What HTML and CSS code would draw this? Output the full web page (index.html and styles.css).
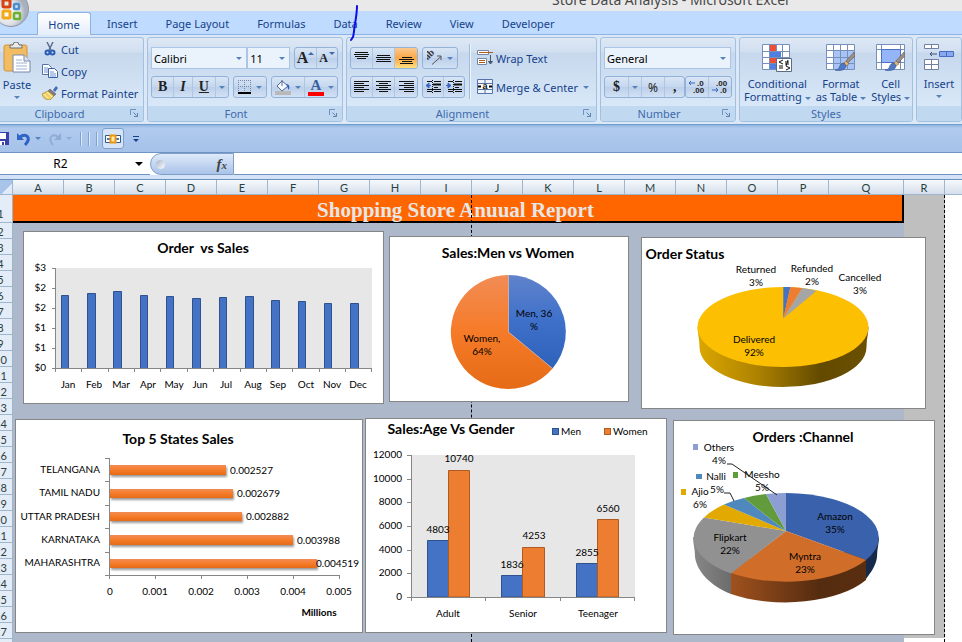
FILE: index.html
```html
<!DOCTYPE html>
<html lang="en">
<head>
<meta charset="utf-8">
<title>Store Data Analysis - Microsoft Excel</title>
<link rel="stylesheet" href="styles.css">
</head>
<body>
<svg class="defs" aria-hidden="true">
  <symbol id="launcher" viewBox="0 0 9 9"><path d="M.5 6V.5H6" fill="none" stroke="#6d93bf"/><path d="M3.500 3.500l3 3M4 7.500h3.500V4" fill="none" stroke="#5b80ad"/></symbol>
  <symbol id="brush" viewBox="0 0 20 20"><path d="M19 0L11 9l2 2 7-7z" fill="#9a8f86" stroke="#67605c" stroke-width=".6"/><path d="M11 9l-2 2 2 3 3-2z" fill="#e8b469" stroke="#7b5b33" stroke-width=".5"/><path d="M9 11c-3 0-4 2-5 5-1 1-2 2-4 2 4 1 10 1 11-4z" fill="#4f78c4" stroke="#345596" stroke-width=".6"/></symbol>
</svg>

<header class="titlebar"><h1>Store Data Analysis - Microsoft Excel</h1></header>

<button class="office" aria-label="Office menu">
  <svg viewBox="0 0 36 36" width="36" height="36">
    <defs><radialGradient id="orb" cx=".4" cy=".6"><stop offset="0" stop-color="#fff"/><stop offset=".7" stop-color="#dcdfe6"/><stop offset="1" stop-color="#aab1be"/></radialGradient></defs>
    <circle cx="18" cy="18" r="17.500" fill="url(#orb)" stroke="#8e96a6"/>
    <g fill="none" stroke-width="3">
      <rect x="10" y="9" width="7" height="7" rx="1" stroke="#d8420f"/>
      <rect x="21" y="13" width="5" height="5" rx="1" stroke="#4a8fd2" stroke-width="2.500"/>
      <rect x="10" y="20" width="7" height="7" rx="1" stroke="#f3a916"/>
      <rect x="21" y="22" width="6" height="6" rx="1" stroke="#6cb22c" stroke-width="2.500"/>
    </g>
  </svg>
</button>

<nav class="tabs">
  <a class="tab active" href="#home">Home</a>
  <a class="tab" href="#insert">Insert</a>
  <a class="tab" href="#layout">Page Layout</a>
  <a class="tab" href="#formulas">Formulas</a>
  <a class="tab" href="#data">Data</a>
  <a class="tab" href="#review">Review</a>
  <a class="tab" href="#view">View</a>
  <a class="tab" href="#developer">Developer</a>
</nav>
<svg class="pen" viewBox="0 0 10 38" width="10" height="38" aria-hidden="true"><path d="M7 1c0 6-1 12-2 18-1 5-1 10-2 13l-2 3" fill="none" stroke="#0d0de8" stroke-width="2" stroke-linecap="round"/></svg>

<section class="ribbon">
  <div class="group clipboard">
    <div class="body">
      <button class="tall paste">
        <svg width="28" height="31" viewBox="0 0 28 31"><rect x="1" y="3" width="23" height="26" rx="2" fill="#f2bd62" stroke="#cf9440"/><path d="M7 6V3h3a3 3 0 0 1 6 0h3v3z" fill="#e9eaec" stroke="#6f6f6f"/><path d="M10 13h11l6 6v11H10z" fill="#fff" stroke="#7688a8"/><path d="M21 13v6h6" fill="#dde6f4" stroke="#7688a8"/><path d="M13 18h6m-6 3h11m-11 3h11m-11 3h11" stroke="#9fb2d3"/></svg>
        <span>Paste</span><i class="caret"></i>
      </button>
      <div class="stack">
        <button class="flat"><svg width="16" height="14" viewBox="0 0 16 14"><path d="M5 0l4 8M11 0L7 8" stroke="#5c6f8c" stroke-width="1.500"/><circle cx="5.500" cy="10.500" r="2" fill="none" stroke="#2a5db5" stroke-width="2"/><circle cx="10.500" cy="10.500" r="2" fill="none" stroke="#2a5db5" stroke-width="2"/></svg>Cut</button>
        <button class="flat"><svg width="16" height="14" viewBox="0 0 16 14"><path d="M.5.500h6l3 3v7h-9z" fill="#fff" stroke="#5572a8"/><path d="M2 4h4M2 6h5M2 8h5" stroke="#6f93d2"/><path d="M6.500 4.500h6l3 3v6h-9z" fill="#fff" stroke="#3c5fa5"/><path d="M8 8h4m-4 2h6m-6 2h6" stroke="#6f93d2"/></svg>Copy</button>
        <button class="flat"><svg width="16" height="14" viewBox="0 0 16 14"><path d="M11 4l3-4 2 2-3 4z" fill="#456bb8"/><path d="M8 3l6 5-2 2-6-5z" fill="#7f7a83" stroke="#555" stroke-width=".5"/><path d="M6 5L0 8c1 4 4 6 8 6l4-4z" fill="#f1d269" stroke="#a27b2b" stroke-width=".7"/><path d="M2 8l4 4m-1-6l5 5" stroke="#fff2b3"/></svg>Format Painter</button>
      </div>
    </div>
    <footer><span>Clipboard</span><svg class="launch"><use href="#launcher"/></svg></footer>
  </div>

  <div class="group font">
    <div class="body rows">
      <div class="row">
        <span class="combo name"><select aria-label="Font"><option>Calibri</option></select></span>
        <span class="combo size"><select aria-label="Font size"><option>11</option></select></span>
        <span class="set push"><button class="serif a-big" aria-label="Grow font">A<sup class="up"></sup></button><button class="serif a-small" aria-label="Shrink font">A<sup class="down"></sup></button></span>
      </div>
      <div class="row">
        <span class="set"><button class="serif">B</button><button class="serif it">I</button><button class="serif"><u>U</u></button><button class="mini" aria-label="Underline styles"><i class="caret"></i></button></span>
        <span class="set"><button aria-label="Borders"><svg width="14" height="14" viewBox="0 0 14 14"><path d="M.5 0v13M6.500 0v13M12.500 0v13M0 .5h13M0 6.500h13" stroke="#7185a5" stroke-dasharray="1 1"/><path d="M0 13h13" stroke="#000" stroke-width="2"/></svg><i class="caret"></i></button></span>
        <span class="set push tints"><button aria-label="Fill color"><svg width="16" height="16" viewBox="0 0 16 16"><path d="M7 2l6 5-6 5-5-5z" fill="#f4f8ff" stroke="#53688e"/><path d="M7 7V1" stroke="#53688e"/><path d="M11 5c3 0 4 2 3 6-2-2-1-4-3-6z" fill="#2e62b8"/><path d="M0 14h16" stroke="#b9b9b9" stroke-width="4"/></svg><i class="caret"></i></button><button aria-label="Font color"><span class="ink">A</span><i class="caret"></i></button></span>
      </div>
    </div>
    <footer><span>Font</span><svg class="launch"><use href="#launcher"/></svg></footer>
  </div>

  <div class="group align">
    <div class="body split">
      <div class="rows">
        <div class="row">
          <span class="set three"><button aria-label="Top align"><svg class="lines" width="15" height="14"><path d="M1 1.500h13M0 3.500h15M1 5.500h13M3 7.500h9"/></svg></button><button aria-label="Middle align"><svg class="lines" width="15" height="14"><path d="M1 4.500h13M0 6.500h15M1 8.500h13M0 10.500h15"/></svg></button><button class="on" aria-label="Bottom align"><svg class="lines" width="15" height="14"><path d="M3 6.500h10M0 8.500h15M3 10.500h10M1 12.500h13"/></svg></button></span>
          <span class="set"><button aria-label="Orientation"><svg width="16" height="16" viewBox="0 0 16 16"><text x="0" y="9" class="ab" transform="rotate(-45 2 9)">ab</text><path d="M5 14.500l9-8M10 6h4v4" stroke="#555" fill="none"/></svg><i class="caret"></i></button></span>
        </div>
        <div class="row">
          <span class="set three"><button aria-label="Align left"><svg class="lines" width="15" height="14"><path d="M0 1.500h15M0 3.500h10M0 5.500h15M0 7.500h10M0 9.500h15M0 11.500h10"/></svg></button><button aria-label="Center"><svg class="lines" width="15" height="14"><path d="M0 1.500h15M3 3.500h9M0 5.500h15M3 7.500h9M0 9.500h15M3 11.500h9"/></svg></button><button aria-label="Align right"><svg class="lines" width="15" height="14"><path d="M0 1.500h15M5 3.500h10M0 5.500h15M5 7.500h10M0 9.500h15M5 11.500h10"/></svg></button></span>
          <span class="set two"><button aria-label="Decrease indent"><svg class="lines" width="16" height="14"><path d="M2 1.500h5M9 1.500h7M9 7.500h4M2 9.500h14M2 11.500h5M9 11.500h7"/><path d="M8 4.500h8" stroke-width="2"/><path d="M7.500 0v14" stroke-dasharray="1 1"/><path class="arrow" d="M6 5.500H2M4 3L1 5.500 4 8z"/></svg></button><button aria-label="Increase indent"><svg class="lines" width="16" height="14"><path d="M2 1.500h5M9 1.500h7M9 7.500h4M2 9.500h14M2 11.500h5M9 11.500h7"/><path d="M8 4.500h8" stroke-width="2"/><path d="M7.500 0v14" stroke-dasharray="1 1"/><path class="arrow" d="M0 5.500h4M2 3l3 2.500L2 8z"/></svg></button></span>
        </div>
      </div>
      <div class="rule"></div>
      <div class="rows">
        <button class="flat"><svg width="16" height="16" viewBox="0 0 16 16"><path d="M.5.500h11v4H.5zM.5 8.500h9v6H.5z" fill="#fff" stroke="#7286a8"/><path d="M2 2.500h14M2 10.500h6M2 12.500h6" stroke="#b05a1c"/><path d="M13.500 5v6M11.500 11.500h4L13.500 14z" fill="#567" stroke="#456"/></svg>Wrap Text</button>
        <button class="flat"><svg width="16" height="16" viewBox="0 0 16 16"><path d="M.5.500h15v14H.5zM8 0v4M8 11v4M0 4.500h16M0 10.500h16" fill="#eef4fd" stroke="#5673a6"/><path d="M1 5h14v5H1z" fill="#fff"/><path d="M1 7.500h3M12 7.500h3" stroke="#000" stroke-width="2"/><text x="8" y="10" class="tiny-a">a</text></svg>Merge &amp; Center<i class="caret"></i></button>
      </div>
    </div>
    <footer><span>Alignment</span><svg class="launch"><use href="#launcher"/></svg></footer>
  </div>

  <div class="group number">
    <div class="body rows">
      <div class="row"><span class="combo wide"><select aria-label="Number format"><option>General</option></select></span></div>
      <div class="row">
        <span class="set"><button class="serif">$</button><button class="mini" aria-label="Currency list"><i class="caret"></i></button><button class="percent">%</button><button class="serif">,</button></span>
        <span class="set two push"><button aria-label="Increase decimal"><svg width="18" height="14" viewBox="0 0 18 14"><path d="M7 3H1m2-2L1 3l2 2" stroke="#3565c4" fill="none"/><text x="9" y="6" class="dec">.0</text><text x="5" y="13" class="dec">.00</text></svg></button><button aria-label="Decrease decimal"><svg width="18" height="14" viewBox="0 0 18 14"><text x="5" y="6" class="dec">.00</text><path d="M1 10h6m-2-2l2 2-2 2" stroke="#3565c4" fill="none"/><text x="9" y="13" class="dec">.0</text></svg></button></span>
      </div>
    </div>
    <footer><span>Number</span><svg class="launch"><use href="#launcher"/></svg></footer>
  </div>

  <div class="group styles">
    <div class="body">
      <button class="tall">
        <svg width="30" height="28" viewBox="0 0 30 28"><path d="M.5.500h27v25H.5z" fill="#fff"/><path d="M7 0h7v7H7zM7 13h12v6H7z" fill="#ee4e38"/><path d="M7 7h12v6H7zM7 19h7v6H7z" fill="#4f7fe0"/><path d="M.5.500h27v25H.5zM7.500 0v25M14.500 0v7M20.500 0v25M0 7.500h28M0 13.500h28M0 19.500h28" fill="none" stroke="#7790bb"/><path d="M14.500 14.500h15v13h-15z" fill="#fff" stroke="#5b6c88"/><path d="M21 16l-4 2 4 2M17 22h4M17 24h4M23 18h4M23 20h4M26 16l-2 6M24 22l4 2-4 2" fill="none" stroke="#111"/></svg>
        <span>Conditional<br>Formatting <i class="caret"></i></span>
      </button>
      <button class="tall">
        <svg width="30" height="28" viewBox="0 0 30 28"><path d="M.5.500h28v25H.5z" fill="#fff"/><path d="M7 7h22v18H7z" fill="#a8c4f7"/><path d="M.5.500h28v25H.5zM7.500 0v25M14.500 0v25M21.500 0v25M0 6.500h28M0 13.500h28M0 19.500h28" fill="none" stroke="#7790bb"/><use href="#brush" x="9" y="8" width="20" height="20"/></svg>
        <span>Format<br>as Table <i class="caret"></i></span>
      </button>
      <button class="tall">
        <svg width="30" height="28" viewBox="0 0 30 28"><path d="M.5.500h28v25H.5z" fill="#fff"/><path d="M.5.500h28v25H.5zM5.500 0v25M24.500 0v25M0 5.500h28M0 18.500h28" fill="none" stroke="#7790bb"/><path d="M5.500 5.500h19v13h-19z" fill="#94b6f8" stroke="#4a71c4"/><use href="#brush" x="9" y="8" width="20" height="20"/></svg>
        <span>Cell<br>Styles <i class="caret"></i></span>
      </button>
    </div>
    <footer><span>Styles</span></footer>
  </div>

  <div class="group cells">
    <div class="body">
      <button class="tall">
        <svg width="30" height="28" viewBox="0 0 30 28"><path d="M.5.500h14v4H.5zM7.500.500v4M.5 15.500h14v10H.5zM7.500 15v10M.5 20.500h14" fill="#fff" stroke="#7181a3"/><path d="M15.500 7.500h14v5h-14zM22.500 7v5" fill="#86a9f0" stroke="#466cc0"/><path d="M13 10H6m2-2l-2 2 2 2" fill="none" stroke="#3a5078"/></svg>
        <span>Insert</span><i class="caret"></i>
      </button>
    </div>
    <footer></footer>
  </div>
</section>

<div class="quick">
  <button aria-label="Save"><svg width="10" height="14" viewBox="0 0 10 14"><path d="M0 0h9v13H0z" fill="#3d3fa8"/><path d="M0 1h6v6H0zM0 9h5v4H0z" fill="#fff"/><path d="M2 10h2v3H2z" fill="#3d3fa8"/></svg></button>
  <button aria-label="Undo"><svg width="14" height="14" viewBox="0 0 14 14"><path d="M3 5c6-5 12 1 5 8" fill="none" stroke="#2f64c6" stroke-width="3"/><path d="M0 1v7h7z" fill="#2f64c6"/></svg></button><i class="caret"></i>
  <button aria-label="Redo"><svg width="14" height="14" viewBox="0 0 14 14"><path d="M10 5C5 0-1 6 5 13" fill="none" stroke="#8facd6" stroke-width="2"/><path d="M13 1v7H6z" fill="#8facd6"/></svg></button><i class="caret dim"></i>
  <span class="bars"><b></b><b></b><b></b></span>
  <button class="boxed" aria-label="Merge cells"><svg width="16" height="10" viewBox="0 0 16 10"><path d="M.5 1.500h15v7H.5z" fill="#fff" stroke="#33598e"/><path d="M2 5h3m6 0h3" stroke="#4b77bb" stroke-width="2"/><path d="M5.500 1.500h5v7h-5z" fill="#ffe9a6" stroke="#e79711" stroke-width="2"/></svg></button>
  <button class="more" aria-label="Customize toolbar"><i class="caret navy"></i></button>
</div>

<div class="formula">
  <label class="namebox"><input aria-label="Name box" value="R2"><i class="caret black"></i></label>
  <button class="fx" aria-label="Insert function"><span class="knob"></span><em>f<small>x</small></em></button>
  <input class="entry" aria-label="Formula">
</div>

<main class="grid">
  <div class="colheads">
    <span class="corner"></span><span>A</span><span>B</span><span>C</span><span>D</span><span>E</span><span>F</span><span>G</span><span>H</span><span>I</span><span>J</span><span>K</span><span>L</span><span>M</span><span>N</span><span>O</span><span>P</span><span class="q">Q</span><span class="r">R</span><span class="rest"></span>
  </div>
  <div class="lower">
    <div class="rowheads"><span class="first">1</span><span>2</span><span>3</span><span>4</span><span>5</span><span>6</span><span>7</span><span>8</span><span>9</span><span>10</span><span>11</span><span>12</span><span>13</span><span>14</span><span>15</span><span>16</span><span>17</span><span>18</span><span>19</span><span>20</span><span>21</span><span>22</span><span>23</span><span>24</span><span>25</span><span>26</span><span>27</span></div>
    <div class="sheet">
      <div class="filled"><h2>Shopping Store Anuual Report</h2></div>
      <div class="gray"></div>
      <div class="break mid"></div>
      <div class="break last"></div>

      <figure class="chart c1">
        <svg viewBox="24 232 359 171" role="img" aria-label="Order vs Sales">
          <text class="t" x="203" y="253">Order &#160;vs Sales</text>
          <path d="M56 268h316v100H56z" fill="#e7e7e7"/>
          <g fill="#4472c4" stroke="#2f528f"><path d="M61.500 368.500v-73h7v73zM87.500 368.500v-75h8v75zM113.500 368.500v-77h8v77zM140.500 368.500v-73h7v73zM166.500 368.500v-72h7v72zM192.500 368.500v-70h8v70zM219.500 368.500v-71h7v71zM245.500 368.500v-72h8v72zM271.500 368.500v-68h8v68zM298.500 368.500v-67h7v67zM324.500 368.500v-65h7v65zM350.500 368.500v-65h8v65z"/></g>
          <path class="axis" d="M55.500 268v104M52 268.500h4M52 288.500h4M52 308.500h4M52 328.500h4M52 348.500h4M52 368.500h320M81.500 368v4M108.500 368v4M134.500 368v4M160.500 368v4M187.500 368v4M213.500 368v4M240.500 368v4M266.500 368v4M292.500 368v4M319.500 368v4M345.500 368v4M371.500 368v4"/>
          <g class="end"><text x="46" y="271">$3</text><text x="46" y="291">$2</text><text x="46" y="311">$2</text><text x="46" y="331">$1</text><text x="46" y="351">$1</text><text x="46" y="371">$0</text></g>
          <g><text x="68" y="388">Jan</text><text x="94" y="388">Feb</text><text x="121" y="388">Mar</text><text x="148" y="388">Apr</text><text x="174" y="388">May</text><text x="200" y="388">Jun</text><text x="226" y="388">Jul</text><text x="253" y="388">Aug</text><text x="278" y="388">Sep</text><text x="306" y="388">Oct</text><text x="332" y="388">Nov</text><text x="358" y="388">Dec</text></g>
        </svg>
      </figure>

      <figure class="chart c2">
        <svg viewBox="390 237 238 164" role="img" aria-label="Sales: Men vs Women">
          <defs>
            <linearGradient id="men" x2="0" y2="1"><stop offset="0" stop-color="#6083cb"/><stop offset=".5" stop-color="#3e70ca"/><stop offset="1" stop-color="#2e61ba"/></linearGradient>
            <linearGradient id="women" x2="0" y2="1"><stop offset="0" stop-color="#f18c55"/><stop offset=".5" stop-color="#f67b28"/><stop offset="1" stop-color="#e56b17"/></linearGradient>
          </defs>
          <text class="t" x="508" y="258">Sales:Men vs Women</text>
          <path d="M508.500 332V275a57.500 57 0 0 1 44 93.500z" fill="url(#men)"/>
          <path d="M508.500 332V275a57.500 57 0 1 0 44 93.500z" fill="url(#women)"/>
          <path d="M508.500 275v57l44 36.500" fill="none" stroke="#c9b3ad" stroke-width=".7"/>
          <text x="534" y="317">Men, 36</text><text x="534" y="330">%</text>
          <text x="482" y="342">Women,</text><text x="482" y="355">64%</text>
        </svg>
      </figure>

      <figure class="chart c3">
        <svg viewBox="642 238 283 170" role="img" aria-label="Order Status">
          <defs><linearGradient id="gold"><stop offset="0" stop-color="#dca700"/><stop offset=".35" stop-color="#ad8200"/><stop offset=".72" stop-color="#634a00"/><stop offset="1" stop-color="#6b5000"/></linearGradient></defs>
          <text class="t" x="685" y="259">Order Status</text>
          <path d="M697.500 327c0 6 2 12 2 20a83.500 40 0 0 0 167 0c0-8 2-14 2-20z" fill="url(#gold)"/>
          <ellipse cx="783" cy="327" rx="85.500" ry="40" fill="#fcbf02"/>
          <path d="M783.300 318.500V287h7z" fill="#4472c4"/>
          <path d="M783.300 318.500l7-31.500 12 1z" fill="#ed7d31"/>
          <path d="M783.300 318.500l19-30.500q8 1 14 3z" fill="#a5a5a5"/>
          <text x="756" y="273">Returned</text><text x="756" y="286">3%</text>
          <text x="812" y="272">Refunded</text><text x="812" y="285">2%</text>
          <text x="860" y="281">Cancelled</text><text x="860" y="294">3%</text>
          <text x="754" y="343">Delivered</text><text x="754" y="356">92%</text>
        </svg>
      </figure>

      <figure class="chart c4">
        <svg viewBox="16 420 346 212" role="img" aria-label="Top 5 States Sales">
          <text class="t" x="178" y="444">Top 5 States Sales</text>
          <g class="soft" fill="url(#women)"><rect x="110" y="465" width="116" height="10"/><rect x="110" y="489" width="123" height="9"/><rect x="110" y="512" width="132" height="9"/><rect x="110" y="535" width="183" height="10"/><rect x="110" y="559" width="207" height="9"/></g>
          <path class="axis" d="M109.500 458v121M105 458.500h4M105 481.500h4M105 505.500h4M105 528.500h4M105 552.500h4M105 575.500h235M155.500 575v4M201.500 575v4M247.500 575v4M293.500 575v4M339.500 575v4"/>
          <g class="end"><text x="100" y="473">TELANGANA</text><text x="100" y="496">TAMIL NADU</text><text x="100" y="520">UTTAR PRADESH</text><text x="100" y="543">KARNATAKA</text><text x="100" y="566">MAHARASHTRA</text></g>
          <g class="start"><text x="230" y="474">0.002527</text><text x="237" y="497">0.002679</text><text x="246" y="520">0.002882</text><text x="297" y="544">0.003988</text><text x="316" y="567">0.004519</text></g>
          <g><text x="110" y="595">0</text><text x="155" y="595">0.001</text><text x="201" y="595">0.002</text><text x="247" y="595">0.003</text><text x="293" y="595">0.004</text><text x="339" y="595">0.005</text></g>
          <text class="bold" x="319" y="616">Millions</text>
        </svg>
      </figure>

      <figure class="chart c5">
        <svg viewBox="366 419 300 213" role="img" aria-label="Sales: Age vs Gender">
          <text class="t" x="451" y="434">Sales:Age Vs Gender</text>
          <rect x="552.500" y="428.500" width="6" height="6" fill="#4472c4" stroke="#2f528f"/><rect x="604.500" y="428.500" width="6" height="6" fill="#ed7d31" stroke="#ae5a21"/>
          <g class="start"><text x="561" y="435">Men</text><text x="613" y="435">Women</text></g>
          <path d="M412 455h223v142H412z" fill="#e7e7e7"/>
          <path d="M427.500 597v-56.500h21V597zM501.500 597v-21.500h21V597zM576.500 597v-33.500h21V597z" fill="#4472c4" stroke="#2f528f"/>
          <path d="M448.500 597V470.500h21V597zM522.500 597v-49.500h22V597zM597.500 597v-77.500h21V597z" fill="#ed7d31" stroke="#ae5a21"/>
          <path class="axis" d="M411.500 455v146M407 455.500h4M407 479.500h4M407 502.500h4M407 526.500h4M407 550.500h4M407 573.500h4M407 597.500h228M485.500 597v4M560.500 597v4M634.500 597v4"/>
          <g class="end"><text x="402" y="458">12000</text><text x="402" y="482">10000</text><text x="402" y="505">8000</text><text x="402" y="529">6000</text><text x="402" y="553">4000</text><text x="402" y="576">2000</text><text x="402" y="600">0</text></g>
          <text x="438" y="533">4803</text><text x="459" y="462">10740</text><text x="512" y="568">1836</text><text x="534" y="539">4253</text><text x="587" y="556">2855</text><text x="608" y="512">6560</text>
          <text x="448" y="617">Adult</text><text x="523" y="617">Senior</text><text x="598" y="617">Teenager</text>
        </svg>
      </figure>

      <figure class="chart c6">
        <svg viewBox="674 421 260 213" role="img" aria-label="Orders: Channel">
          <defs><linearGradient id="rust"><stop offset="0" stop-color="#a0511d"/><stop offset=".65" stop-color="#552c10"/><stop offset="1" stop-color="#5a2e10"/></linearGradient><linearGradient id="ash"><stop offset="0" stop-color="#888"/><stop offset="1" stop-color="#6c6c6c"/></linearGradient></defs>
          <text class="t" x="803" y="442">Orders :Channel</text>
          <path d="M693 537c0 6 2 12 2 20 2 15 16 29 36 37v-45z" fill="url(#ash)"/>
          <path d="M879 537c0 6-2 12-2 20-1 8-5 14-11 22v-32z" fill="#182a4c"/>
          <path d="M731 560v34a93 44.500 0 0 0 135-14V550z" fill="url(#rust)"/>
          <path d="M786 531V493a93 44.500 0 0 1 80 67z" fill="#3a62ac"/>
          <path d="M786 531l80 29a93 44.500 0 0 1-135 13z" fill="#d06d29"/>
          <path d="M786 531l-55 42.500a93 44.500 0 0 1-27-56z" fill="#919191"/>
          <path d="M786 531l-82-13.500q7-7 20-13z" fill="#e2a902"/>
          <path d="M786 531l-62-26.500q9-4 20-6.500z" fill="#4f88bd"/>
          <path d="M786 531l-42-33q11-3 22-4z" fill="#629b3b"/>
          <path d="M786 531l-20-37q10-1 20-1z" fill="#8d9fd2"/>
          <path d="M693 444h5v6h-5z" fill="#8d9fd2"/><path d="M696 474h6v5h-6z" fill="#4f88bd"/><path d="M733 472h5v6h-5z" fill="#629b3b"/><path d="M681 489h5v6h-5z" fill="#e2a902"/>
          <path d="M727 464h5l45 31M724 493h6l4 8" fill="none" stroke="#222"/>
          <text x="719" y="451">Others</text><text x="719" y="464">4%</text>
          <text x="716" y="480">Nalli</text><text x="717" y="493">5%</text>
          <text x="762" y="478">Meesho</text><text x="762" y="491">5%</text>
          <text x="700" y="495">Ajio</text><text x="700" y="508">6%</text>
          <text x="835" y="520">Amazon</text><text x="835" y="533">35%</text>
          <text x="730" y="541">Flipkart</text><text x="730" y="554">22%</text>
          <text x="805" y="560">Myntra</text><text x="805" y="573">23%</text>
        </svg>
      </figure>
    </div>
  </div>
</main>
</body>
</html>
```
FILE: styles.css
```css
* { box-sizing: border-box; }
body {
  margin: 0;
  height: 100vh;
  overflow: hidden;
  display: flex;
  flex-direction: column;
  font-family: "Noto Sans", "Open Sans", sans-serif;
  font-size: 11px;
  color: #15428b;
  background: #fff;
}
button, input, select { font: inherit; color: inherit; border: 0; background: none; margin: 0; padding: 0; }
button { display: flex; align-items: center; justify-content: center; white-space: nowrap; }
svg { display: block; flex: none; }
.defs { width: 0; height: 0; position: absolute; }

/* Title and tabs */
.titlebar { height: 11px; background: #e9e9e9; overflow: hidden; display: flex; align-items: flex-end; flex: none; padding-left: 552px; }
.titlebar h1 { margin: 0; font-size: 14px; line-height: 22px; font-weight: 400; color: #4a4a4a; white-space: nowrap; }
.office { position: absolute; left: -7px; top: -9px; z-index: 3; }
.tabs { display: flex; height: 24px; flex: none; padding: 1px 0 0 37px; background: #bfdbff; border-bottom: 1px solid #8db2e3; }
.tab { padding: 0 12px; margin-right: 4px; line-height: 24px; color: #15428b; text-decoration: none; white-space: nowrap; }
.tab.active { height: 24px; width: 54px; padding: 0; text-align: center; background: linear-gradient(#fff, #e3edfa); border: 1px solid #8db2e3; border-bottom: 0; border-radius: 3px 3px 0 0; line-height: 23px; }
.pen { position: absolute; left: 350px; top: 5px; z-index: 4; }

/* Ribbon */
.ribbon { display: flex; gap: 3px; flex: none; height: 90px; padding: 2px 0 2px; background: #dbe8f8; border-bottom: 1px solid #6f9dcd; overflow: hidden; }
.group { flex: none; height: 85px; display: flex; flex-direction: column; border: 1px solid #a3c0e0; border-radius: 3px; overflow: hidden; background: linear-gradient(#dee8f5 0, #d1dff0 14px, #c7d8ed 15px, #d8e8f8 68px); }
.group .body { flex: 1; display: flex; }
.group footer { height: 15px; display: flex; align-items: center; justify-content: center; background: #c1d8f1; color: #3e6aaa; position: relative; line-height: 15px; }
.launch { width: 9px; height: 9px; position: absolute; right: 4px; top: 3px; }
.clipboard { width: 144px; border-left: 0; border-radius: 0 3px 3px 0; }
.clipboard footer { padding-right: 24px; }
.font { width: 196px; }
.font footer, .align footer, .number footer { padding-right: 18px; }
.align { width: 251px; }
.number { width: 136px; }
.styles { width: 174px; }
.cells { flex: 1; }
.caret { display: inline-block; flex: none; width: 0; height: 0; border: 3px solid transparent; border-top: 3px solid #5682bb; border-bottom: 0; }
.rows { display: flex; flex-direction: column; gap: 7px; padding: 9px 4px 0 3px; }
.body.rows { flex-direction: column; }
.row { display: flex; gap: 4px; height: 22px; }
.split .rows { padding-right: 3px; }
.split .flat { height: 22px; }
.rule { width: 1px; height: 55px; margin: 6px 3px 0 1px; background: #9dbbdd; border-right: 1px solid #eef5fd; box-sizing: content-box; }
.row .push { margin-left: auto; }
.set { display: flex; flex: none; border: 1px solid #93b2d9; border-radius: 3px; background: linear-gradient(#d8e5f5, #c5d7ee 50%, #bbcfea 51%, #d2e1f4); overflow: hidden; }
.set button { padding: 0 4px; gap: 4px; color: #222; border-right: 1px solid #aec6e3; }
.set button:last-child { border-right: 0; }
.set .mini { padding: 0 3px; }
.tints button { padding: 0 3px; }
.set.three button { padding: 0; width: 22px; }
.set.two button { padding: 0 2px; }
.set .on { background: linear-gradient(#fbc98e, #fba745 50%, #fddf7c); }
.lines path { stroke: #111; fill: none; }
.lines .arrow { stroke: #3565c4; fill: #3565c4; }
.serif { font-family: "Liberation Serif", serif; font-weight: 700; font-size: 14px; }
.row .set .serif { padding: 0 6px; }
.number .row .set .serif { padding: 0 8px; }
.number .row .set .percent { padding: 0 6px; }
.number .row { gap: 0; }
.it { font-style: italic; }
.row .set .a-big { font-size: 16px; padding: 0 2px; gap: 0; }
.row .set .a-small { font-size: 12px; padding: 0 2px; gap: 1px; }
.up, .down { width: 0; height: 0; border: 3px solid transparent; align-self: flex-start; margin-top: 4px; }
.up { border-bottom-color: #3c69b2; border-top: 0; }
.down { border-top-color: #3c69b2; border-bottom: 0; }
.ink { font-family: "Liberation Serif", serif; font-weight: 700; font-size: 15px; line-height: 13px; color: #3a5f9f; width: 16px; border-bottom: 4px solid #f00; }
.percent { font-size: 12px; }
.ab { font: 700 10px "Liberation Serif", serif; fill: #333; }
.tiny-a { font: 700 9px "Liberation Sans", sans-serif; text-anchor: middle; fill: #111; }
.dec { font: 700 8px "Liberation Sans", sans-serif; fill: #222; }
.combo { position: relative; display: flex; background: #eaf2fb; border: 1px solid #abc5e6; color: #000; }
.combo select { appearance: none; width: 100%; padding: 0 2px; outline: 0; }
.combo::after { content: ""; position: absolute; right: 4px; top: 9px; border: 3px solid transparent; border-top-color: #5682bb; border-bottom: 0; }
.name { width: 97px; margin-right: -4px; }
.size { width: 43px; }
.wide { width: 100%; }
.flat { justify-content: flex-start; gap: 3px; height: 22px; }
.flat .caret { margin-left: 2px; }
.stack { padding: 0 0 0 8px; }
.tall { flex-direction: column; justify-content: flex-start; padding-top: 6px; line-height: 13px; text-align: center; }
.tall svg { margin-bottom: 5px; }
.tall .caret { vertical-align: middle; }
.tall > .caret { margin-top: 5px; }
.paste { width: 34px; padding-top: 4px; }
.styles .body { justify-content: space-between; padding: 0 2px 0 4px; }
.cells .tall { width: 46px; }

/* Quick access toolbar */
.quick { flex: none; height: 28px; display: flex; align-items: center; gap: 4px; background: linear-gradient(#8fb2de 0, #b0caee 3px, #a6c2e9); border-bottom: 1px solid #6f93c2; }
.quick > button:nth-of-type(2) { margin-left: 3px; }
.quick > button:nth-of-type(3) { margin-left: 3px; }
.dim { border-top-color: #8facd6; }
.bars { display: flex; gap: 6px; margin: 0 0 0 4px; }
.bars b { width: 2px; height: 14px; border-left: 1px solid #7fa1cf; border-right: 1px solid #dce9fb; }
.boxed { width: 22px; height: 21px; border: 1px solid #7fa0cd; border-radius: 3px; background: #d5e4f7; }
.more { margin-left: 5px; border-top: 1px solid #15428b; padding-top: 2px; }
.navy { border-top-color: #15428b; }

/* Formula bar */
.formula { flex: none; height: 26px; display: flex; background: #fff; border-bottom: 4px solid #d3e2f6; color: #000; font-size: 12px; }
.namebox { display: flex; align-items: center; width: 150px; padding-right: 7px; border-bottom: 1px solid #6f93c2; }
.namebox input { flex: 1; min-width: 0; text-align: center; padding-right: 14px; }
.black { border-width: 4px 4px 0; border-top-color: #000; }
.fx { width: 84px; justify-content: space-between; padding: 0 6px 0 5px; border: 1px solid #7f9fc9; border-radius: 11px 0 0 11px; background: linear-gradient(#dfeafa, #a9c3e8); }
.knob { width: 9px; height: 9px; border-radius: 50%; background: linear-gradient(135deg, #a7b3c6, #fff); }
.fx em { font: italic 700 15px/18px "Liberation Serif", serif; color: #444; }
.fx small { font-size: 11px; }
.entry { flex: 1; min-width: 0; padding: 0 4px; border-bottom: 1px solid #6f93c2; }

/* Worksheet */
.grid { flex: 1; min-height: 0; display: flex; flex-direction: column; font-family: Lato, sans-serif; color: #27413e; }
.colheads { display: flex; flex: none; height: 16px; border-top: 1px solid #6b8fbe; border-bottom: 1px solid #9eb6ce; background: linear-gradient(#f6fafd, #d5deea); font-size: 11px; line-height: 15px; text-align: center; }
.colheads span { width: 51px; flex: none; border-right: 1px solid #9eb6ce; }
.colheads .corner { width: 13px; background: linear-gradient(135deg, #a9c4e9 60%, #dfeafa 61%); }
.colheads .q { width: 75px; }
.colheads .r { width: 41px; }
.colheads .rest { flex: 1; border: 0; }
.lower { flex: 1; min-height: 0; display: flex; overflow: hidden; }
.rowheads { flex: none; width: 24px; margin-left: -11px; display: flex; flex-direction: column; background: #e4ecf7; border-right: 1px solid #9eb6ce; text-align: center; }
.rowheads span { height: 16px; flex: none; line-height: 17px; border-bottom: 1px solid #9eb6ce; }
.rowheads .first { height: 28px; line-height: 37px; }
.sheet { flex: 1; position: relative; display: flex; min-width: 0; overflow: hidden; }
.filled { width: 891px; flex: none; background: #adb9ca; }
.filled h2 { margin: 0; height: 28px; padding-right: 4px; border: solid #000; border-width: 0 2px 2px 0; background: #f60; color: #e7e6e6; font: 700 21px/30px "Liberation Serif", serif; text-align: center; }
.gray { width: 41px; margin-bottom: 4px; background: #bfbfbf; }
.break { position: absolute; top: 0; bottom: 0; border-left: 1px dashed #000; }
.mid { left: 458px; }
.last { left: 931px; }

/* Charts float over the cells */
.chart { position: absolute; margin: 0; background: #fff; border: 1px solid #868686; }
.chart svg { width: 100%; height: 100%; }
.chart text { font-family: Lato, sans-serif; font-size: 10px; fill: #000; text-anchor: middle; }
.chart .end text { text-anchor: end; }
.chart .start text { text-anchor: start; }
.chart .t { font-size: 14px; font-weight: 700; white-space: pre; }
.chart .bold { font-weight: 700; }
.axis { fill: none; stroke: #868686; }
.soft { filter: drop-shadow(1px 2px 1px rgba(0, 0, 0, .4)); }
.c1 { left: 10px; top: 36px; width: 361px; height: 173px; }
.c2 { left: 376px; top: 41px; width: 240px; height: 166px; }
.c3 { left: 628px; top: 42px; width: 285px; height: 172px; }
.c4 { left: 2px; top: 224px; width: 348px; height: 214px; }
.c5 { left: 352px; top: 223px; width: 302px; height: 215px; }
.c6 { left: 660px; top: 225px; width: 262px; height: 215px; }
```
